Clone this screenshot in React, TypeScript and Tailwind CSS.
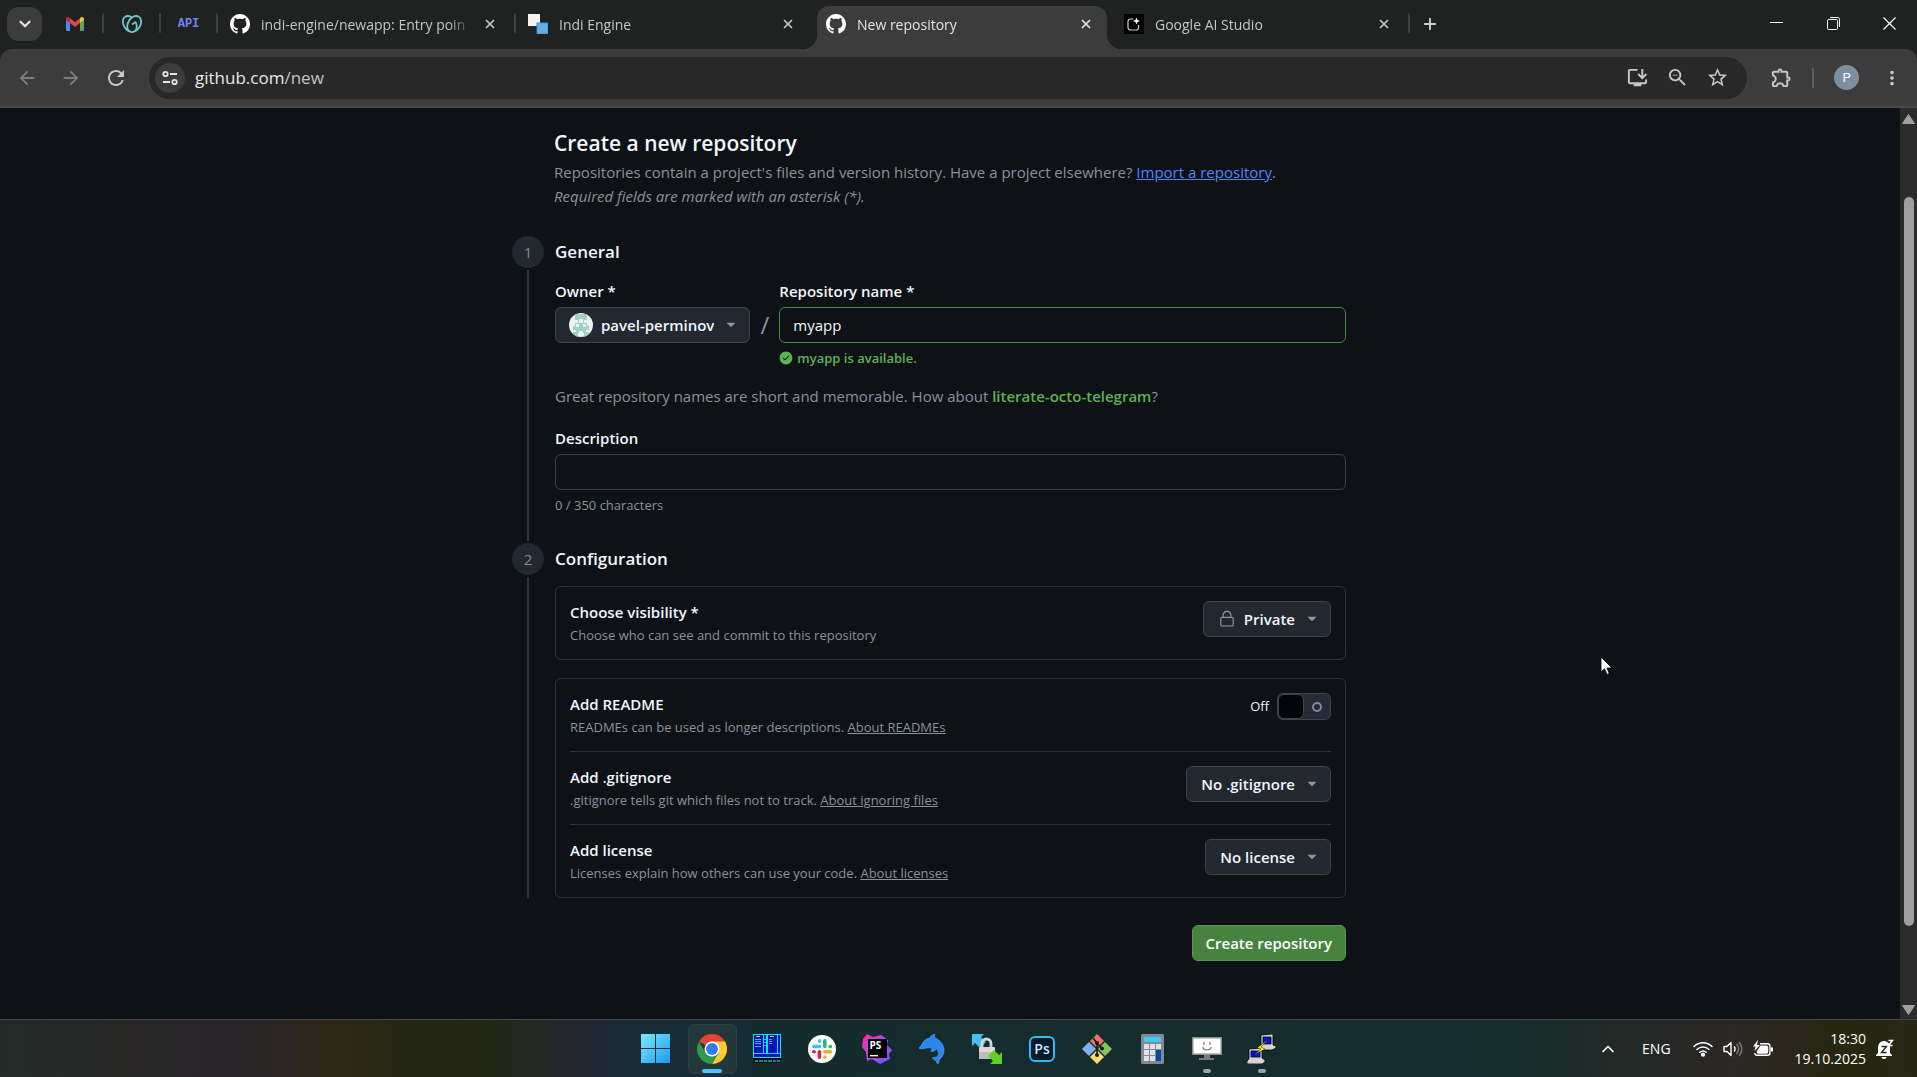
import React, { useState } from 'react';
import { GoCheckCircleFill, GoLock, GoTriangleDown } from 'react-icons/go';
import {
  MdArrowBack,
  MdArrowForward,
  MdInstallDesktop,
  MdMoreVert,
  MdOutlineExtension,
  MdRefresh,
  MdStarOutline,
  MdZoomOut,
} from 'react-icons/md';
import { SiGodaddy } from 'react-icons/si';
import { ChevronDown, ChevronUp, Plus, X } from 'lucide-react';

/* ---------- Favicons ---------- */

const GithubIcon = () => (
  <svg viewBox="0 0 16 16" className="size-5" fill="currentColor">
    <path d="M8 0c4.420 0 8 3.580 8 8a8.013 8.013 0 0 1-5.450 7.590c-.4.080-.55-.17-.55-.38 0-.27.010-1.130.010-2.200 0-.75-.25-1.230-.54-1.480 1.780-.2 3.650-.88 3.650-3.950 0-.88-.31-1.590-.82-2.150.080-.2.360-1.020-.080-2.120 0 0-.67-.22-2.200.82-.64-.18-1.320-.27-2-.27-.68 0-1.360.090-2 .27-1.530-1.030-2.200-.82-2.200-.82-.44 1.100-.16 1.920-.080 2.120-.51.56-.82 1.280-.82 2.150 0 3.060 1.860 3.750 3.640 3.950-.23.2-.44.55-.51 1.070-.46.21-1.610.55-2.330-.66-.15-.24-.6-.83-1.230-.82-.67.010-.27.380.010.530.340.190.730.900.820 1.130.160.450.680 1.310 2.690.940 0 .670.010 1.300.010 1.490 0 .210-.15.450-.55.380A7.995 7.995 0 0 1 0 8c0-4.420 3.580-8 8-8Z" />
  </svg>
);

const GmailIcon = () => (
  <svg viewBox="0 0 18 14" className="h-[14px] w-[18px]">
    <path d="M0 2v11.200c0 .5.4.8.8.8H4V5L0 2z" fill="#4f86f7" />
    <path d="M18 2v11.200c0 .5-.4.8-.8.8H14V5l4-3z" fill="#57a85c" />
    <path d="M4 1.200l5 4 5-4V6L9 10 4 6V1.200z" fill="#dd4b3e" />
    <path d="M0 2C0 .2 2-.6 3.400.6L4 1.200V6L0 3V2z" fill="#b93228" />
    <path d="M18 2c0-1.800-2-2.600-3.400-1.400L14 1.200V6l4-3V2z" fill="#f3c03c" />
  </svg>
);

const IndiIcon = () => (
  <svg viewBox="0 0 20 20" className="size-5">
    <rect x="0" y="0" width="12" height="12" fill="#f2f2f2" />
    <rect x="9" y="9" width="11" height="11" fill="#62aeea" stroke="#3f8fd0" strokeWidth="1" />
  </svg>
);

const StudioIcon = () => (
  <svg viewBox="0 0 20 20" className="size-5">
    <rect width="20" height="20" fill="#000" />
    <path d="M9 5H6.500A2.500 2.500 0 0 0 4 7.500v6A2.500 2.500 0 0 0 6.500 16H12a2.500 2.500 0 0 0 2.500-2.500V11" fill="none" stroke="#c9c9c9" strokeWidth="1.200" />
    <path d="M12.500 3.500l1 2.500 2.500 1-2.500 1-1 2.500-1-2.500-2.500-1 2.500-1z" fill="#fff" />
  </svg>
);

/* ---------- Browser window ---------- */

const TabSeparator: React.FC<{ hidden?: boolean }> = ({ hidden }) => (
  <div className="flex w-2 shrink-0 items-center justify-center">
    {!hidden && <span className="mb-[3px] h-5 w-[2px] rounded-full bg-[#3f4140]" />}
  </div>
);

interface TabProps {
  icon: React.ReactNode;
  title: string;
  active?: boolean;
}

// Curved feet on both sides of the active tab.
const flare = 'before:absolute before:bottom-0 before:-left-[14px] before:size-[14px] before:bg-[radial-gradient(circle_at_0_0,transparent_14px,#3c3c3c_14px)] after:absolute after:bottom-0 after:-right-[14px] after:size-[14px] after:bg-[radial-gradient(circle_at_100%_0,transparent_14px,#3c3c3c_14px)]';

const Tab: React.FC<TabProps> = ({ icon, title, active }) => (
  <div
    className={`relative mt-[6px] flex w-[290px] items-center rounded-t-xl pr-[14px] pb-[7px] pl-[9px] ${
      active ? `bg-[#3c3c3c] text-[#e3e3e3] ${flare}` : 'text-[#c4c6c5]'
    }`}
  >
    <span className="shrink-0 text-white">{icon}</span>
    <span className="ml-[11px] flex-1 overflow-hidden text-[14px] whitespace-nowrap [mask-image:linear-gradient(to_right,#000_88%,transparent)]">
      {title}
    </span>
    <button aria-label={`Close ${title}`} className="ml-[10px] shrink-0">
      <X className="size-[14px]" strokeWidth={3} />
    </button>
  </div>
);

const PinnedTab: React.FC<{ label: string; children: React.ReactNode }> = ({ label, children }) => (
  <button aria-label={label} className="mb-[2px] flex w-[49px] shrink-0 items-center justify-center">
    {children}
  </button>
);

const TabStrip = () => (
  <div className="flex h-[49px] bg-[#1f2221]">
    <button aria-label="Search tabs" className="mt-[7px] mr-2 ml-[7px] flex h-[34px] w-[35px] items-center justify-center rounded-xl bg-[#3c3c3c] text-[#e3e3e3]">
      <ChevronDown className="size-[18px]" strokeWidth={3} />
    </button>
    <PinnedTab label="Gmail"><GmailIcon /></PinnedTab>
    <TabSeparator />
    <PinnedTab label="GoDaddy"><SiGodaddy className="size-5 text-[#72c3cb]" /></PinnedTab>
    <TabSeparator />
    <PinnedTab label="API docs">
      <span className="font-['Liberation_Mono'] text-[12px] font-bold text-[#6d86f5]">API</span>
    </PinnedTab>
    <TabSeparator />
    <Tab icon={<GithubIcon />} title="indi-engine/newapp: Entry poin" />
    <TabSeparator />
    <Tab icon={<IndiIcon />} title="Indi Engine" />
    <TabSeparator hidden />
    <Tab icon={<GithubIcon />} title="New repository" active />
    <TabSeparator hidden />
    <Tab icon={<StudioIcon />} title="Google AI Studio" />
    <TabSeparator />
    <button aria-label="New tab" className="mb-[2px] ml-2 text-[#d0d2d1]">
      <Plus className="size-[18px]" strokeWidth={2.5} />
    </button>
    {/* Window controls */}
    <div className="mb-[2px] ml-auto flex items-center text-white">
      <button aria-label="Minimize" className="flex w-[57px] justify-center">
        <svg viewBox="0 0 13 13" className="size-[13px]"><path d="M0 5.500h13" stroke="currentColor" /></svg>
      </button>
      <button aria-label="Restore" className="flex w-[57px] justify-center">
        <svg viewBox="0 0 13 13" className="size-[13px]" fill="none" stroke="currentColor">
          <rect x=".5" y="2.500" width="10" height="10" rx="1" />
          <path d="M3 .5h7.500a2 2 0 0 1 2 2V10" />
        </svg>
      </button>
      <button aria-label="Close" className="flex w-[55px] justify-center">
        <svg viewBox="0 0 13 13" className="size-[13px]"><path d="M.5.5l12 12M12.500.5l-12 12" stroke="currentColor" strokeWidth="1.200" /></svg>
      </button>
    </div>
  </div>
);

const Toolbar = () => (
  <div className="bg-[#1f2221]">
    <div className="flex h-[59px] items-center rounded-t-xl border-b-2 border-[#474747] bg-[#3c3c3c] pr-[14px] pl-4 text-[#c7c7c7]">
      <button aria-label="Back" className="text-[#7d7d7d]"><MdArrowBack className="size-[22px]" /></button>
      <button aria-label="Forward" className="ml-[22px] text-[#7d7d7d]"><MdArrowForward className="size-[22px]" /></button>
      <button aria-label="Reload" className="ml-[22px]"><MdRefresh className="size-6" /></button>
      <div className="ml-[21px] flex h-[42px] flex-1 items-center rounded-full bg-[#282828] pr-[18px] pl-[6px]">
        <button aria-label="Site information" className="flex size-[30px] items-center justify-center rounded-full bg-[#3c3c3c]">
          <svg viewBox="0 0 16 16" className="size-4" fill="none" stroke="#e3e3e3" strokeWidth="1.800">
            <circle cx="3.500" cy="4" r="2.200" />
            <path d="M8 4h7M1 12h7" />
            <circle cx="12.500" cy="12" r="2.200" />
          </svg>
        </button>
        <span className="ml-[10px] text-[17px] text-[#e8e8e8]">github.com<span className="text-[#c3c3c3]">/new</span></span>
        <div className="ml-auto flex items-center gap-[17px]">
          <button aria-label="Install app"><MdInstallDesktop className="size-[23px]" /></button>
          <button aria-label="Zoom"><MdZoomOut className="size-[23px]" /></button>
          <button aria-label="Bookmark this tab"><MdStarOutline className="size-[23px]" /></button>
        </div>
      </div>
      <button aria-label="Extensions" className="ml-[23px]"><MdOutlineExtension className="size-[23px]" /></button>
      <span className="ml-[19px] h-5 w-[2px] bg-[#5c5c5c]" />
      <button aria-label="Profile" className="ml-[20px] flex size-[25px] items-center justify-center rounded-full bg-[#7c8f9e] font-['Roboto'] text-[13px] text-white">
        P
      </button>
      <button aria-label="Menu" className="ml-[22px]"><MdMoreVert className="size-[22px]" /></button>
    </div>
  </div>
);

/* ---------- Form parts ---------- */

interface StepProps {
  number: number;
  title: string;
  last?: boolean;
  children: React.ReactNode;
}

const Step: React.FC<StepProps> = ({ number, title, last, children }) => (
  <section className="flex gap-[11px]">
    <div className="flex w-8 shrink-0 flex-col items-center">
      <span className="flex size-8 items-center justify-center rounded-full bg-[#212830] text-[15px] text-[#848b94]">{number}</span>
      <span className={`mt-[2px] w-[2px] flex-1 bg-[#2f3439] ${last ? '' : 'mb-[2px]'}`} />
    </div>
    <div className={`min-w-0 flex-1 ${last ? '' : 'pb-7'}`}>
      <h2 className="mb-[11px] text-[17px] leading-8 font-semibold text-[#f0f6fc]">{title}</h2>
      {children}
    </div>
  </section>
);

interface PickerProps {
  id: string;
  icon?: React.ReactNode;
  options: string[];
  className?: string;
}

const Picker: React.FC<PickerProps> = ({ id, icon, options, className = 'pl-[14px]' }) => {
  const [value, setValue] = useState(options[0]);
  return (
    <div className={`flex h-9 shrink-0 items-center rounded-md border border-[#3d444d] bg-[#212830] pr-[10px] ${className}`}>
      {icon}
      <select
        id={id}
        value={value}
        onChange={(e) => setValue(e.target.value)}
        className="field-sizing-content appearance-none bg-transparent text-[15px] font-semibold text-[#f0f6fc] outline-none"
      >
        {options.map((option) => (
          <option key={option}>{option}</option>
        ))}
      </select>
      <GoTriangleDown className="pointer-events-none ml-[9px] size-4 text-[#9198a1]" />
    </div>
  );
};

interface SettingRowProps {
  htmlFor: string;
  title: string;
  text: string;
  link?: string;
  children: React.ReactNode;
}

const SettingRow: React.FC<SettingRowProps> = ({ htmlFor, title, text, link, children }) => (
  <div className="flex items-start justify-between py-[14px]">
    <div>
      <label htmlFor={htmlFor} className="block text-[15px] leading-[22px] font-semibold text-[#f0f6fc]">{title}</label>
      <p className="mt-[2px] text-[13px] leading-5 text-[#8b929b]">
        {text} {link && <a href="#" className="underline">{link}</a>}
      </p>
    </div>
    {children}
  </div>
);

const Avatar = () => (
  <svg viewBox="0 0 24 24" className="mr-2 size-6 rounded-full">
    <rect width="24" height="24" fill="#f0f0f0" />
    <path d="M6 1h12v6h-3v3h3v3h2v4h-3v2h3v5h-5v-4H9v4H4v-5h3v-2H4v-4h2v-3h3V7H6z" fill="#9ed2c3" />
    <path d="M10 6h4v4h-4zM7 11h3v3H7zM14 11h3v3h-3zM10 18h4v2h-4z" fill="#f0f0f0" />
  </svg>
);

const NewRepositoryForm = () => {
  const [name, setName] = useState('myapp');
  const [description, setDescription] = useState('');
  const [readme, setReadme] = useState(false);

  return (
    <form className="mx-auto w-full max-w-[876px] pt-[19px] pr-[42px] pb-14" onSubmit={(e) => e.preventDefault()}>
      <header className="pl-[42px] text-[15px] leading-6 text-[#8b929b]">
        <h1 className="mb-px text-[21px] leading-8 font-semibold text-[#f0f6fc]">Create a new repository</h1>
        <p>
          Repositories contain a project's files and version history. Have a project elsewhere?{' '}
          <a href="#" className="text-[#4f87f5] underline">Import a repository</a>.
        </p>
        <p className="mb-7 italic">Required fields are marked with an asterisk (*).</p>
      </header>

      <Step number={1} title="General">
        <div className="flex">
          <div>
            <label htmlFor="owner" className="mb-1 block text-[15px] leading-6 font-semibold text-[#f0f6fc]">Owner *</label>
            <Picker id="owner" icon={<Avatar />} options={['pavel-perminov']} className="pl-[13px]" />
          </div>
          <span className="w-[29px] self-start pt-7 text-center text-[24px] leading-9 text-[#8b929b]">/</span>
          <div className="min-w-0 flex-1">
            <label htmlFor="repo-name" className="mb-1 block text-[15px] leading-6 font-semibold text-[#f0f6fc]">Repository name *</label>
            <input
              id="repo-name"
              value={name}
              onChange={(e) => setName(e.target.value)}
              className="block h-9 w-full rounded-md border border-[#438a3c] bg-[#0e1116] px-[13px] text-[15px] text-[#f0f6fc] outline-none"
            />
            <p className="mt-[5px] flex items-center gap-1 text-[13px] leading-5 font-semibold text-[#5cb253]">
              <GoCheckCircleFill className="size-[14px]" />
              {name} is available.
            </p>
          </div>
        </div>
        <p className="mt-4 text-[15px] leading-6 text-[#8b929b]">
          Great repository names are short and memorable. How about{' '}
          <button type="button" className="font-semibold text-[#5cb253]" onClick={() => setName('literate-octo-telegram')}>
            literate-octo-telegram
          </button>
          ?
        </p>
        <label htmlFor="description" className="mt-[18px] mb-1 block text-[15px] leading-6 font-semibold text-[#f0f6fc]">Description</label>
        <input
          id="description"
          value={description}
          maxLength={350}
          onChange={(e) => setDescription(e.target.value)}
          className="block h-9 w-full rounded-md border border-[#3a4047] bg-[#0e1116] px-[13px] text-[15px] text-[#f0f6fc] outline-none"
        />
        <p className="mt-[5px] text-[13px] leading-5 text-[#8b929b]">{description.length} / 350 characters</p>
      </Step>

      <Step number={2} title="Configuration" last>
        <div className="rounded-md border border-[#2f3439] px-[14px]">
          <SettingRow htmlFor="visibility" title="Choose visibility *" text="Choose who can see and commit to this repository">
            <Picker id="visibility" icon={<GoLock className="mr-2 size-[18px] text-[#9198a1]" />} options={['Private', 'Public']} />
          </SettingRow>
        </div>
        <div className="mt-[18px] divide-y divide-[#2f3439] rounded-md border border-[#2f3439] px-[14px]">
          <SettingRow htmlFor="readme" title="Add README" text="READMEs can be used as longer descriptions." link="About READMEs">
            <label className="flex cursor-pointer items-center gap-2 text-[13px] text-[#f0f6fc]">
              {readme ? 'On' : 'Off'}
              <input id="readme" type="checkbox" className="peer sr-only" checked={readme} onChange={(e) => setReadme(e.target.checked)} />
              <span className="flex h-[27px] w-[54px] items-center rounded-md border border-[#3d444d] bg-[#262c36] peer-checked:flex-row-reverse">
                <span className="h-[25px] w-[26px] rounded-md border border-[#3d444d] bg-[#010409]" />
                <span className="flex flex-1 justify-center">
                  <span className="size-[10px] rounded-full border-2 border-[#848b94]" />
                </span>
              </span>
            </label>
          </SettingRow>
          <SettingRow htmlFor="gitignore" title="Add .gitignore" text=".gitignore tells git which files not to track." link="About ignoring files">
            <Picker id="gitignore" options={['No .gitignore', 'Node', 'Python']} />
          </SettingRow>
          <SettingRow htmlFor="license" title="Add license" text="Licenses explain how others can use your code." link="About licenses">
            <Picker id="license" options={['No license', 'MIT License', 'Apache License 2.0']} />
          </SettingRow>
        </div>
      </Step>

      <div className="mt-[27px] flex justify-end">
        <button type="submit" className="h-9 rounded-md border border-[#5b9455] bg-[#46833f] px-[13px] text-[15px] font-semibold text-white">
          Create repository
        </button>
      </div>
    </form>
  );
};

const Scrollbar = () => (
  <div className="flex w-[17px] shrink-0 flex-col items-center bg-[#2b2b2b] pt-[6px] pb-1">
    <svg viewBox="0 0 13 10" className="h-[10px] w-[13px]"><path d="M6.500.5l6 9H.5z" fill="#9f9f9f" stroke="#9f9f9f" strokeLinejoin="round" /></svg>
    <div className="flex w-full flex-1 flex-col items-center pt-[73px] pb-[79px]">
      <div className="w-[10px] flex-1 rounded-full bg-[#9f9f9f]" />
    </div>
    <svg viewBox="0 0 13 10" className="h-[10px] w-[13px]"><path d="M6.500 9.500l6-9H.5z" fill="#9f9f9f" stroke="#9f9f9f" strokeLinejoin="round" /></svg>
  </div>
);

/* ---------- Taskbar icons ---------- */

const WindowsIcon = () => (
  <svg viewBox="0 0 29 29" className="size-[29px]">
    <defs>
      <linearGradient id="win" x1="0" y1="0" x2="1" y2="1">
        <stop offset="0" stopColor="#7be9fb" />
        <stop offset="1" stopColor="#1b9cf0" />
      </linearGradient>
    </defs>
    <path d="M0 0h14v14H0zM15 0h14v14H15zM0 15h14v14H0zM15 15h14v14H15z" fill="url(#win)" />
  </svg>
);

const ChromeIcon = () => (
  <svg viewBox="0 0 48 48" className="size-[30px]">
    <path d="M24 24L3.200 12A24 24 0 0 1 44.800 12z" fill="#dd4438" />
    <path d="M24 12h20.800A24 24 0 0 1 24 48l10.400-18z" fill="#fcc934" />
    <path d="M13.600 30L3.200 12A24 24 0 0 0 24 48l10.400-18z" fill="#2f9a4b" />
    <circle cx="24" cy="24" r="12" fill="#fff" />
    <circle cx="24" cy="24" r="9.500" fill="#2f7de9" />
  </svg>
);

const FarIcon = () => (
  <svg viewBox="0 0 28 29" className="h-[29px] w-7">
    <path d="M0 0h28v24H0z" fill="#00e5f0" />
    <path d="M1 1h9v18H1zM11 1h2v18h-2zM15 1h9v18h-9zM25 1h2v18h-2zM1 20h26v3H1z" fill="#0712b8" />
    <path d="M3 2h4v1H3zM17 2h4v1h-4z" fill="#e8d838" />
    <path d="M2 5h6v1H2zM2 7h6v1H2zM2 9h6v1H2zM2 12h6v1H2zM16 5h3v1h-3zM16 7h3v1h-3zM16 9h3v1h-3zM11 5h2v1h-2zM11 8h2v1h-2zM11 11h2v1h-2z" fill="#35b9f2" />
    <path d="M0 24h28v5H0z" fill="#06121a" />
    <path d="M2 26h3v2H2zM6 26h4v2H6zM11 26h3v2h-3zM15 26h4v2h-4zM20 26h3v2h-3zM24 26h3v2h-3z" fill="#12878c" />
  </svg>
);

const SlackIcon = () => (
  <svg viewBox="0 0 28 28" className="size-7" strokeWidth="3.600" strokeLinecap="round">
    <circle cx="14" cy="14" r="14" fill="#fff" />
    <path d="M5.800 11.500h5.600M11.500 5.800v.4" stroke="#36c5f0" />
    <path d="M16.800 5.800v5.600M22.200 11.500h.2" stroke="#2eb67d" />
    <path d="M16.800 16.700h5.600M16.800 22v.2" stroke="#ecb22e" />
    <path d="M11.400 16.700v5.600M5.800 16.700h.4" stroke="#e01e5a" />
  </svg>
);

const PhpStormIcon = () => (
  <svg viewBox="0 0 30 30" className="size-[30px]">
    <defs>
      <linearGradient id="storm" x1="0" y1="0" x2="1" y2="1">
        <stop offset="0" stopColor="#ff2d90" />
        <stop offset=".5" stopColor="#b04bec" />
        <stop offset="1" stopColor="#6a55f8" />
      </linearGradient>
    </defs>
    <path d="M5 0l6 3 8-2 7 5-1 5 5 5-3 4 1 5-10 5-8-5-5 2-1-9-4-5 1-8z" fill="url(#storm)" />
    <rect x="6" y="5" width="19" height="19" fill="#000" />
    <text x="7.500" y="15" fill="#fff" fontSize="10" fontWeight="700" fontFamily="Open Sans, sans-serif">PS</text>
    <path d="M8 21h8v1.400H8z" fill="#fff" />
  </svg>
);

const DolphinIcon = () => (
  <svg viewBox="0 0 26 30" className="h-[30px] w-[26px]">
    <path d="M16 0c-.8 1.600-.6 3 .6 4.200C21.500 6.500 25 11 25 16.500c0 4-2 7-5 9.300.3 1.400 0 2.900-1.200 4.200-.9-.7-1.400-1.800-1.400-3.200-1.500-.3-3-1.200-4.200-3.200 2.300.3 4-.2 5.300-1.400 1.700-2 1-5.200-1.200-7.400-1.200 2.200-3.300 3-5.800 2.500 1.200-1 1.700-2.100 1.400-3.200-2.800-.6-5.200-.4-7.200.3-1.600.5-3.500.6-5.400 0-.4-.7.200-1.500 1.700-2.300C3.700 7.500 6.500 4.800 10.700 4 12 1.800 13.700.4 16 0z" fill="#2b86ee" stroke="#5ca6f2" strokeWidth=".6" />
  </svg>
);

const WinScpIcon = () => (
  <svg viewBox="0 0 30 30" className="size-[30px]">
    <path d="M0 0h12L9 3l5 5-6 6-5-5-3 3z" fill="#46c0ee" />
    <path d="M10 14V9.500a4.500 4.500 0 0 1 9 0V14" fill="none" stroke="#d6d6d6" strokeWidth="2.800" />
    <rect x="7" y="13" width="16" height="12" rx="1" fill="#d9d9d9" />
    <path d="M7 18h16v7H7z" fill="#bdbdbd" />
    <path d="M30 30H18l3-3-5-5 6-6 5 5 3-3z" fill="#62cf24" />
  </svg>
);

const PhotoshopIcon = () => (
  <span className="flex size-[26px] items-center justify-center rounded-md border-2 border-[#2dbcf5] bg-[#071a2b] text-[14px] font-semibold text-[#c6ebff]">
    Ps
  </span>
);

const GitIcon = () => (
  <svg viewBox="0 0 30 30" className="size-[30px]">
    <path d="M15 0l7 7-7 7-7-7z" fill="#f0716b" />
    <path d="M23 8l7 7-7 7-7-7z" fill="#86c559" />
    <path d="M7 8l7 7-7 7-7-7z" fill="#7faef7" />
    <path d="M15 16l7 7-7 7-7-7z" fill="#fbdb6c" />
    <path d="M11 4l4 5v12M15 9l5 5.500" fill="none" stroke="#1b1b1b" strokeWidth="1.600" />
    <circle cx="15" cy="9" r="2" fill="#1b1b1b" />
    <circle cx="15" cy="21" r="2" fill="#1b1b1b" />
    <circle cx="20" cy="14.500" r="2" fill="#1b1b1b" />
  </svg>
);

const CalculatorIcon = () => (
  <svg viewBox="0 0 23 30" className="h-[30px] w-[23px]">
    <rect width="23" height="30" rx="1.500" fill="#7f8a96" />
    <path d="M3 3h17v5H3z" fill="#3fc9f5" />
    <path d="M3 10h5v5H3zM9 10h5v5H9zM15 10h5v5h-5zM3 16h5v5H3zM9 16h5v5H9zM3 22h5v5H3zM9 22h5v5H9z" fill="#dfe3e7" />
    <path d="M15 16h5v11h-5z" fill="#0d4a95" />
  </svg>
);

const MonitorIcon = () => (
  <svg viewBox="0 0 30 24" className="h-6 w-[30px]">
    <path d="M0 0h30v18H0z" fill="#8b8b8b" />
    <path d="M1.500 1.500h27v15h-27z" fill="#fff" />
    <path d="M12 5v3M18 5v3M11 10c0 2 1.500 3 4 3s4-1 4-3" fill="none" stroke="#777" strokeWidth="1.200" />
    <path d="M12 18h6v3h4v2H7v-2h5z" fill="#7a7a7a" />
  </svg>
);

const PuttyIcon = () => (
  <svg viewBox="0 0 30 30" className="size-[30px]">
    <g stroke="#000" strokeWidth=".8">
      <path d="M14 1l12-1v11l3 1v2l-4 2H13l1-4z" fill="#d4d4d4" />
      <path d="M2 15l13-1v10l3 2v2l-3 2H0v-3l2-2z" fill="#d4d4d4" />
      <path d="M16 3h8v7h-8zM4 17h9v6H4z" fill="#0c12d8" />
      <path d="M22 5l-12 9 4 1-7 6 11-6-4-2z" fill="#fff200" strokeWidth=".4" />
    </g>
  </svg>
);

/* ---------- Taskbar ---------- */

const taskbarApps = [
  { name: 'Start', icon: <WindowsIcon /> },
  { name: 'Google Chrome', icon: <ChromeIcon />, state: 'focused' },
  { name: 'Far Manager', icon: <FarIcon /> },
  { name: 'Slack', icon: <SlackIcon /> },
  { name: 'PhpStorm', icon: <PhpStormIcon /> },
  { name: 'Dolphin', icon: <DolphinIcon /> },
  { name: 'WinSCP', icon: <WinScpIcon /> },
  { name: 'Photoshop', icon: <PhotoshopIcon /> },
  { name: 'Git', icon: <GitIcon /> },
  { name: 'Calculator', icon: <CalculatorIcon /> },
  { name: 'Remote desktop', icon: <MonitorIcon />, state: 'open' },
  { name: 'PuTTY', icon: <PuttyIcon />, state: 'open' },
];

const Taskbar = () => (
  <footer className="grid h-[58px] grid-cols-[1fr_auto_1fr] items-center border-t border-[#444a4a] bg-[linear-gradient(to_right,#232b29,#282726_7%,#28252a_12%,#2b2622_15%,#2e2817_17%,#262716_21%,#232815_25%,#252723_28%,#23262f_30%,#172d37_34%,#142c2e_40%,#152d2d_78%,#1e2b28_83%,#282827_88%,#2b2725_91%,#2a2619_94%,#26280f_96%,#272718)]">
    <div />
    <div className="flex">
      {taskbarApps.map((app) => (
        <button
          key={app.name}
          aria-label={app.name}
          className={`relative mx-[3px] flex h-[50px] w-[49px] items-center justify-center rounded-md border first:mr-[5px] ${
            app.state === 'focused' ? 'border-[#2c3f43] bg-[#24373b]' : 'border-transparent'
          }`}
        >
          {app.icon}
          {app.state === 'focused' && <span className="absolute bottom-0 h-1 w-5 rounded-full bg-[#4cc2ff]" />}
          {app.state === 'open' && <span className="absolute bottom-0 h-1 w-2 rounded-full bg-[#9ba3a3]" />}
        </button>
      ))}
    </div>
    <div className="flex items-center justify-end pr-[23px] text-white">
      <ChevronUp className="size-[20px]" strokeWidth={2} />
      <span className="mr-[22px] ml-6 text-[14px]">ENG</span>
      <svg viewBox="0 0 20 16" className="h-4 w-5" fill="none" stroke="currentColor" strokeWidth="1.500" strokeLinecap="round">
        <path d="M1 5.500a12.700 12.700 0 0 1 18 0M4 8.500a8.500 8.500 0 0 1 12 0M6.800 11.300a4.500 4.500 0 0 1 6.400 0" />
        <circle cx="10" cy="13.700" r="1.400" fill="currentColor" />
      </svg>
      <svg viewBox="0 0 20 18" className="ml-[10px] h-[18px] w-5" fill="none" stroke="currentColor" strokeWidth="1.400" strokeLinejoin="round">
        <path d="M1 6.500h3l4-4v13l-4-4H1z" />
        <path d="M11 6.500a3.500 3.500 0 0 1 0 5" />
        <path d="M13.500 4a7 7 0 0 1 0 10M16 2a10 10 0 0 1 0 14" opacity=".4" />
      </svg>
      <svg viewBox="0 0 20 18" className="ml-[10px] h-[18px] w-5">
        <path d="M7 3.700h7.500a2.500 2.500 0 0 1 2.500 2.500v6.600a2.500 2.500 0 0 1-2.500 2.500H4a2.500 2.500 0 0 1-2.300-2.300" fill="none" stroke="currentColor" strokeWidth="1.400" />
        <path d="M7.500 5.500h6.500l1.200 1.200v5.800L14 13.700H4.500L3.500 12zM18 7.500h2v4h-2zM5 0L0 6.500h2.500L1.500 11 7 5H4z" fill="currentColor" />
      </svg>
      <div className="ml-[22px] text-right text-[14px] leading-5">
        <p>18:30</p>
        <p>19.10.2025</p>
      </div>
      <svg viewBox="0 0 18 20" className="ml-[10px] h-5 w-[18px]">
        <path d="M2 14V8a6 6 0 0 1 12 0v6l2 2v1H0v-1zM5.500 18h5a2.500 2 0 0 1-5 0z" fill="currentColor" />
        <path d="M5.500 7.500h5l-5 6h5" fill="none" stroke="#25261a" strokeWidth="1.400" />
        <path d="M12.500 1.500h4l-4 5h4" fill="none" stroke="currentColor" strokeWidth="1.500" />
      </svg>
    </div>
  </footer>
);

const App = () => (
  <div className="relative flex min-h-screen flex-col bg-[#0e1116] font-['Open_Sans','Noto_Sans',sans-serif]">
    <TabStrip />
    <Toolbar />
    <div className="flex flex-1">
      <main className="min-w-0 flex-1">
        <NewRepositoryForm />
      </main>
      <Scrollbar />
    </div>
    <Taskbar />
    {/* Mouse pointer */}
    <svg viewBox="0 0 13 20" className="pointer-events-none absolute top-[656px] left-[1600px] h-5 w-[13px]">
      <path d="M1 1v15l3.500-3.300L7 18.500l2.300-1L7 12h5z" fill="#fff" stroke="#000" strokeWidth=".8" />
    </svg>
  </div>
);

export default App;
